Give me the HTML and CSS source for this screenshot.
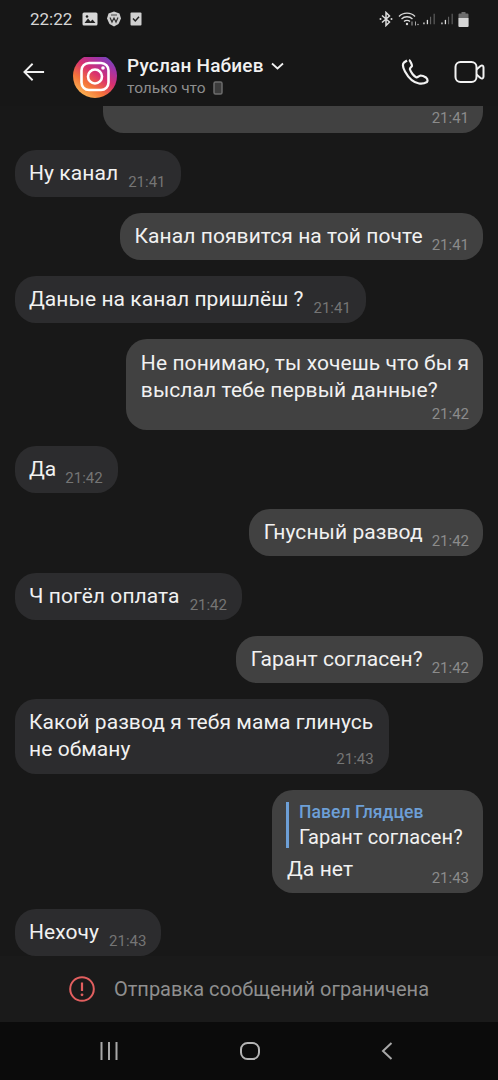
FILE: index.html
```html
<!DOCTYPE html>
<html lang="ru">
<head>
<meta charset="utf-8">
<title>Чат</title>
<link rel="stylesheet" href="styles.css">
</head>
<body>
<div class="phone">
  <header class="top">
    <div class="status">
      <div class="status-left">
        <span class="clock">22:22</span>
        <svg width="16" height="14" viewBox="0 0 16 14"><rect x="0.5" y="0.5" width="15" height="13" rx="1.5" fill="#d8d8d8"/><path d="M2.5 11 6 6.5 8.5 9.5 10.5 7.5 13.5 11Z" fill="#222"/><circle cx="5" cy="4.5" r="1.3" fill="#222"/></svg>
        <svg width="16" height="16" viewBox="0 0 16 16"><path d="M8 .5 13.5 2.5 15 7.5 12.5 13 8 15.5 3.500 13 1 7.500 2.500 2.500Z" fill="#cfcfcf"/><path d="M4 6.500 6 11 8 7 10 11 12 6.500" fill="none" stroke="#333" stroke-width="1.200"/><path d="M5 4h6" stroke="#444" stroke-width="1"/></svg>
        <svg width="12" height="14" viewBox="0 0 12 14"><rect x=".5" y=".5" width="11" height="13" rx="1" fill="#d0d0d0"/><path d="M3 6.500 5.300 9 9 4.800" fill="none" stroke="#222" stroke-width="1.500"/></svg>
      </div>
      <div class="status-right">
        <svg width="14" height="16" viewBox="0 0 14 16"><path d="M3 4.500 10.500 11 7 14.500V1.500L10.500 5 3 11.500" fill="none" stroke="#dcdcdc" stroke-width="1.500"/><circle cx="1.500" cy="8" r="1" fill="#dcdcdc"/><circle cx="12.500" cy="8" r="1" fill="#dcdcdc"/></svg>
        <svg class="wifi" width="21" height="16" viewBox="0 0 21 16"><path d="M1 5.500C5 1 13 1 17 5.500M3.500 8C6.500 5 11.500 5 14.500 8M6 10.500C7.500 9 10.500 9 12 10.500" fill="none" stroke="#d8d8d8" stroke-width="1.300"/><circle cx="9" cy="13" r="1.200" fill="#d8d8d8"/><path d="M14 10.500v4M17.500 10.500v4" stroke="#aaa" stroke-width="1"/><circle cx="20" cy="13.500" r=".8" fill="#aaa"/></svg>
        <svg width="13" height="14" viewBox="0 0 15 14"><path d="M1.500 11h1.500v2H1.500Z" fill="#e0e0e0"/><path d="M5.500 8H7v5H5.500Z" fill="#e0e0e0"/><path d="M9.500 4.500H10.500V13H9.500ZM13.500 1H14.500V13H13.500Z" fill="#777"/></svg>
        <svg width="13" height="14" viewBox="0 0 15 14"><path d="M1.500 11h1.500v2H1.500Z" fill="#e0e0e0"/><path d="M5.500 8H7v5H5.500Z" fill="#e0e0e0"/><path d="M9.500 4.500H10.500V13H9.500ZM13.500 1H14.500V13H13.500Z" fill="#777"/></svg>
        <svg width="11" height="15" viewBox="0 0 10 15"><path d="M3 0h4v1.500h2a1 1 0 0 1 1 1V14a1 1 0 0 1-1 1H1a1 1 0 0 1-1-1V2.500a1 1 0 0 1 1-1h2Z" fill="#6d6d6d"/><path d="M0 6h10v8a1 1 0 0 1-1 1H1a1 1 0 0 1-1-1Z" fill="#d6d6d6"/></svg>
      </div>
    </div>
    <div class="bar">
      <svg class="back" width="22" height="20" viewBox="0 0 24 20"><path d="M1.500 10H23M10.500 1 1.500 10 10.500 19" fill="none" stroke="#f0f0f0" stroke-width="2"/></svg>
      <svg class="avatar" width="44" height="44" viewBox="0 0 44 44">
        <defs>
          <linearGradient id="ig" x1="0.150" y1="1" x2="0.850" y2="0">
            <stop offset="0" stop-color="#fdc65a"/><stop offset=".3" stop-color="#f4743a"/><stop offset=".55" stop-color="#d9306f"/><stop offset=".8" stop-color="#a034a8"/><stop offset="1" stop-color="#5a52c8"/>
          </linearGradient>
        </defs>
        <circle cx="22" cy="22" r="22" fill="url(#ig)"/>
        <path d="M8 3A22 22 0 0 1 36 3Z" fill="#111"/>
        <rect x="8.500" y="9" width="27" height="27" rx="7.500" fill="none" stroke="#fff" stroke-width="2.600"/>
        <circle cx="22" cy="22.500" r="7" fill="none" stroke="#fff" stroke-width="2.600"/>
        <circle cx="30" cy="14" r="1.800" fill="#fff"/>
      </svg>
      <div class="who">
        <div class="name">Руслан Набиев
          <svg width="13" height="8" viewBox="0 0 13 8"><path d="M1 1.500 6.500 6.500 12 1.500" fill="none" stroke="#f0f0f0" stroke-width="1.800"/></svg>
        </div>
        <div class="seen">только что
          <svg width="10" height="14" viewBox="0 0 10 14"><rect x="1" y="1" width="8" height="12" rx="1.500" fill="#3c3c3c" stroke="#6c6c6c" stroke-width="1.500"/></svg>
        </div>
      </div>
      <svg class="call" width="28" height="28" viewBox="0 0 28 28"><path d="M6 2.500 3 4.500C1.500 6 1.500 9 4 13.500 7 19 12 24.500 18 25.500 21 26 23.500 25.500 26 24 27 22.500 26.500 21 25 19.500 23.500 18.500 21.500 17.500 19.500 17.500 18 18 17 19.500 15.500 19.500 13 18.500 10 14.500 9 11.500 8.500 10 10 9.500 11 8 11 6 9 2.500 8 2 7 2 6 2.500Z" fill="none" stroke="#f2f2f2" stroke-width="2.200" stroke-linejoin="round"/></svg>
      <svg class="video" width="31" height="22" viewBox="0 0 30 22"><rect x="1" y="1" width="21" height="20" rx="5" fill="none" stroke="#f2f2f2" stroke-width="2"/><path d="M22 8.500 26 5C27.500 4 29 4.500 29 6.500V15.500C29 17.500 27.500 18 26 17L22 13.500" fill="none" stroke="#f2f2f2" stroke-width="2"/></svg>
    </div>
  </header>

  <main class="chat">
    <div class="msg out cut"><span class="time">21:41</span></div>
    <div class="msg in"><span class="text">Ну канал</span><span class="time">21:41</span></div>
    <div class="msg out"><span class="text">Канал появится на той почте</span><span class="time">21:41</span></div>
    <div class="msg in"><span class="text">Даные на канал пришлёш ?</span><span class="time">21:41</span></div>
    <div class="msg out stack"><span class="text">Не понимаю, ты хочешь что бы я<br>выслал тебе первый данные?</span><span class="time">21:42</span></div>
    <div class="msg in short"><span class="text">Да</span><span class="time">21:42</span></div>
    <div class="msg out"><span class="text">Гнусный развод</span><span class="time">21:42</span></div>
    <div class="msg in lower"><span class="text">Ч погёл оплата</span><span class="time">21:42</span></div>
    <div class="msg out"><span class="text">Гарант согласен?</span><span class="time">21:42</span></div>
    <div class="msg in tucked"><span class="text">Какой развод я тебя мама глинусь<br>не обману</span><span class="time">21:43</span></div>
    <div class="msg out reply">
      <div class="quote">
        <div class="quote-name">Павел Глядцев</div>
        <div class="quote-text">Гарант согласен?</div>
      </div>
      <div class="reply-row"><span class="text">Да нет</span><span class="time">21:43</span></div>
    </div>
    <div class="msg in"><span class="text">Нехочу</span><span class="time">21:43</span></div>
  </main>

  <div class="notice">
    <svg width="26" height="26" viewBox="0 0 26 26"><circle cx="13" cy="13" r="11.800" fill="none" stroke="#e25f5f" stroke-width="2"/><path d="M13 6.500V15" stroke="#e25f5f" stroke-width="2.200"/><circle cx="13" cy="18.800" r="1.400" fill="#e25f5f"/></svg>
    <span>Отправка сообщений ограничена</span>
  </div>

  <nav class="nav">
    <svg width="18" height="18" viewBox="0 0 18 18"><path d="M1.500 0V18M9 0V18M16.500 0V18" stroke="#a8a8a8" stroke-width="2"/></svg>
    <svg width="20" height="18" viewBox="0 0 20 18"><rect x="1" y="1" width="18" height="16" rx="6.500" fill="none" stroke="#b4b4b4" stroke-width="2"/></svg>
    <svg width="12" height="18" viewBox="0 0 12 18"><path d="M10.500 1 2 9 10.500 17" fill="none" stroke="#a8a8a8" stroke-width="2"/></svg>
  </nav>
</div>
</body>
</html>
```
FILE: styles.css
```css
* { box-sizing: border-box; }
html, body { margin: 0; padding: 0; background: #181818; }
body { font-family: Roboto, "Noto Sans", sans-serif; }
.phone { width: 498px; height: 1080px; display: flex; flex-direction: column; overflow: hidden; background: #181818; color: #f1f1f1; }

.top { height: 106px; flex: none; background: #171717; }
.status { height: 38px; padding: 0 29px 0 30px; display: flex; justify-content: space-between; align-items: center; }
.status-left, .status-right { display: flex; align-items: center; }
.status-left { gap: 8px; }
.status-right { gap: 5px; }
.wifi { margin-right: -2px; }
.clock { font-size: 17px; color: #d6d6d6; margin-right: 2px; }

.bar { height: 68px; display: flex; align-items: center; padding: 0 13px 0 23px; }
.back { flex: none; margin-right: 28px; }
.avatar { flex: none; margin: 7px 10px 0 0; }
.who { flex: 1; min-width: 0; margin-top: 8px; }
.name { font-size: 19px; line-height: 24px; font-weight: 500; color: #f1f1f1; display: flex; align-items: center; gap: 7px; letter-spacing: .2px; }
.seen { font-size: 15.500px; line-height: 20px; color: #8e8e8e; display: flex; align-items: center; gap: 7px; }
.call { flex: none; margin-right: 25px; }
.video { flex: none; }

.chat { flex: 1; min-height: 0; overflow: hidden; padding: 0 15px; display: flex; flex-direction: column; gap: 16px; }
.msg { flex: none; display: flex; align-items: flex-end; background: #414141; border-radius: 21px; padding: 10px 14px 6px 15px; font-size: 21px; line-height: 27px; letter-spacing: .07px; color: #f1f1f1; }
.msg.in { align-self: flex-start; padding-left: 14px; padding-right: 15px; background: #2c2c2e; }
.msg.out { align-self: flex-end; }
.text { white-space: nowrap; margin-bottom: 4px; }
.time { font-size: 15px; line-height: 18px; letter-spacing: 0; color: #8b8b8b; white-space: nowrap; margin-left: 9px; }
.in .time { color: #757575; margin-left: 10px; }
.in.short .time { margin-left: 9px; }
.lower { margin-top: 1px; }
.cut { width: 380px; height: 27px; padding: 0 14px 6px; border-radius: 0 0 21px 21px; justify-content: flex-end; margin-bottom: 1px; }
.stack { flex-direction: column; align-items: stretch; padding-top: 11px; padding-bottom: 7px; }
.stack .text { margin-bottom: 0; }
.stack .time { align-self: flex-end; margin-top: 1px; }
.tucked .text { margin-bottom: 5px; }
.in.tucked .time { margin-left: -37px; }
.reply { flex-direction: column; align-items: stretch; width: 211px; padding: 12px 14px 6px 15px; }
.quote { border-left: 3px solid #6d9fd6; padding-left: 10px; margin: 0 0 8px -1px; }
.quote-name { font-size: 17.500px; line-height: 21px; font-weight: 500; color: #6d9fd6; margin-bottom: 3px; }
.quote-text { font-size: 20px; line-height: 22px; }
.reply-row { display: flex; justify-content: space-between; align-items: flex-end; }
.reply-row .text { margin-bottom: 4px; }

.notice { height: 66px; flex: none; background: #1a1a1a; display: flex; align-items: center; justify-content: center; gap: 19px; font-size: 20px; color: #8f8f8f; }
.nav { height: 58px; flex: none; background: #0b0b0b; display: flex; align-items: center; justify-content: space-between; padding: 0 105px 0 100px; }
```
